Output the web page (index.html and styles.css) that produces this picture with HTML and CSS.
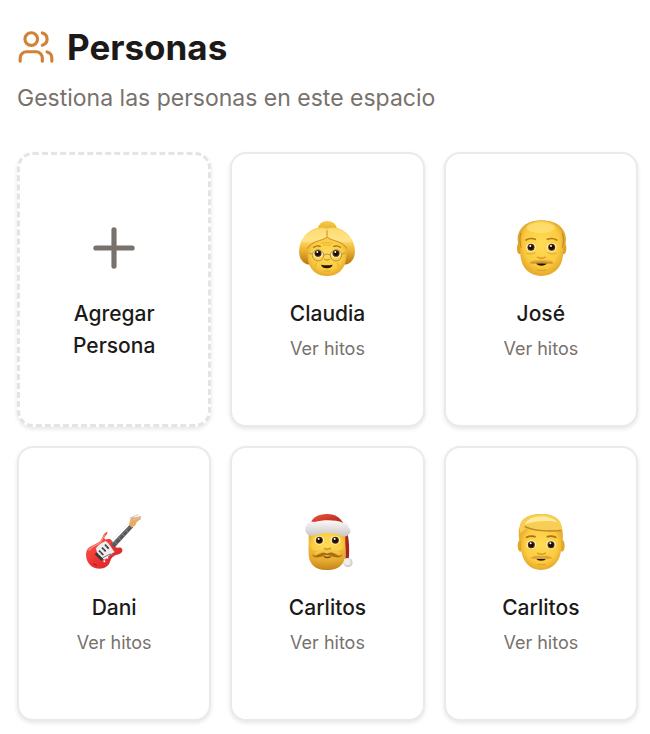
FILE: index.html
```html
<!DOCTYPE html>
<html lang="es">
<head>
<meta charset="utf-8">
<meta name="viewport" content="width=device-width, initial-scale=1">
<title>Personas</title>
<link rel="stylesheet" href="styles.css">
</head>
<body>
<main class="page">
  <header class="header">
    <div class="heading">
      <svg class="heading-icon" viewBox="0 0 24 24" aria-hidden="true">
        <path d="M16 21v-2a4 4 0 0 0-4-4H6a4 4 0 0 0-4 4v2"/>
        <circle cx="9" cy="7" r="4"/>
        <path d="M22 21v-2a4 4 0 0 0-3-3.87"/>
        <path d="M16 3.13a4 4 0 0 1 0 7.75"/>
      </svg>
      <h1 class="title">Personas</h1>
    </div>
    <p class="subtitle">Gestiona las personas en este espacio</p>
  </header>

  <section class="grid">
    <button class="card card-add" type="button">
      <svg class="plus" viewBox="0 0 24 24" aria-hidden="true"><path d="M5 12h14M12 5v14"/></svg>
      <span class="name">Agregar Persona</span>
    </button>

    <a class="card" href="#claudia">
      <svg class="avatar" viewBox="18 18 186 186" aria-hidden="true">
        <defs>
          <radialGradient id="skin" cx=".5" cy=".42" r=".62">
            <stop offset="0" stop-color="#ffdc56"/><stop offset=".65" stop-color="#fbcc40"/><stop offset="1" stop-color="#e0a026"/>
          </radialGradient>
          <linearGradient id="hair" x1="0" y1="0" x2="0" y2="1">
            <stop offset="0" stop-color="#f6c23c"/><stop offset=".3" stop-color="#ffe07a"/><stop offset=".6" stop-color="#efb630"/><stop offset="1" stop-color="#b87512"/>
          </linearGradient>
          <linearGradient id="bun" x1="0" y1="0" x2="0" y2="1">
            <stop offset="0" stop-color="#f8cc48"/><stop offset="1" stop-color="#dc9b20"/>
          </linearGradient>
          <g id="eye">
            <ellipse rx="15" ry="13" fill="#fff0b4"/>
            <circle r="10.500" fill="#4b2a0c"/><circle r="7" fill="#160c05"/>
            <circle cx="-2" cy="-4" r="3" fill="#fff"/>
          </g>
        </defs>
        <ellipse cx="112" cy="52" rx="28" ry="22" fill="url(#bun)"/>
        <path d="M111 52C83 42 44 61 32 95c-9 26-5 50 10 60 8 6 18 7 27 4h84c9 3 19 2 27-4 15-10 19-34 10-60C178 61 139 42 111 52Z" fill="url(#hair)"/>
        <path d="M111 80c-24 11-52 13-58 39v21c3 36 28 55 58 55s55-19 58-55v-21c-6-26-34-28-58-39Z" fill="url(#skin)"/>
        <path d="M111 54C90 44 51 57 35 94c30 1 63 2 76-19 13 21 46 20 76 19-16-37-55-50-76-40Z" fill="#ffe58a" opacity=".65"/>
        <path d="M111 78c-16 14-45 10-60 35M111 78c16 14 45 10 60 35M111 58v18" fill="none" stroke="#c98a22" stroke-width="3"/>
        <path d="M94 97q17-5 34 0M99 103q12-3 24 0" fill="none" stroke="#e0a32b" stroke-width="2"/>
        <path d="M71 109q9-7 20-3M131 106q11-4 20 3" fill="none" stroke="#a86b17" stroke-width="4" stroke-linecap="round"/>
        <use href="#eye" x="84" y="127"/><use href="#eye" x="138" y="127"/>
        <path d="M56 126l12 4M154 130l12-4M100 133q11-9 22 0" fill="none" stroke="#ad9356" stroke-width="3"/>
        <circle cx="84" cy="133" r="17" fill="none" stroke="#ad9356" stroke-width="3"/><circle cx="138" cy="133" r="17" fill="none" stroke="#ad9356" stroke-width="3"/>
        <path d="M102 144q9 6 18 0" fill="none" stroke="#d49528" stroke-width="4"/>
        <path d="M93 161q18 4 35 0c-3 14-32 14-35 0Z" fill="#241504"/>
        <path d="M80 155q-4 6-3 12M142 155q4 6 3 12M102 180h18" fill="none" stroke="#d99b25" stroke-width="2"/>
      </svg>
      <span class="name">Claudia</span>
      <span class="hint">Ver hitos</span>
    </a>

    <a class="card" href="#jose">
      <svg class="avatar" viewBox="18 18 186 186" aria-hidden="true">
        <ellipse cx="47" cy="112" rx="8" ry="18" fill="#e3a023"/><ellipse cx="179" cy="112" rx="8" ry="18" fill="#e3a023"/>
        <path d="M112 28c-45 0-72 25-71 58 0 13 5 21 8 28h128c5-9 9-16 9-28 0-33-26-58-74-58Z" fill="#e0ab34"/>
        <path d="M112 29c-42 0-62 25-63 56v48c3 39 29 62 63 62s62-23 65-62V85c-1-31-23-56-65-56Z" fill="url(#skin)"/>
        <ellipse cx="110" cy="50" rx="42" ry="16" fill="#ffe888" opacity=".55"/>
        <path d="M51 66c-6 17-2 33 0 44M175 66c6 17 2 33 0 44" fill="none" stroke="#bd8520" stroke-width="3"/>
        <path d="M66 87q13-8 28-2M130 85q16-6 28 2" fill="none" stroke="#b4771b" stroke-width="5" stroke-linecap="round"/>
        <use href="#eye" x="81" y="109"/><use href="#eye" x="143" y="109"/>
        <path d="M67 127q14 6 27-2M131 125q13 8 27 2" fill="none" stroke="#e3aa30" stroke-width="3"/>
        <path d="M101 139q11 6 23 0" fill="none" stroke="#dc9e2b" stroke-width="5" stroke-linecap="round"/>
        <path d="M96 156q17 2 33 0c-4 11-29 11-33 0Z" fill="#241504"/>
        <path d="M77 157c6-11 25-10 35-9 12-1 29-2 37 9-13 3-27 1-37 0-11 0-24 3-35 0Z" fill="#cf932b"/>
        <path d="M85 151q27-5 54 0" fill="none" stroke="#e9b64a" stroke-width="4"/>
        <path d="M98 177q14 4 29 0" fill="none" stroke="#d99d26" stroke-width="3"/>
      </svg>
      <span class="name">José</span>
      <span class="hint">Ver hitos</span>
    </a>

    <a class="card" href="#dani">
      <svg class="avatar" viewBox="18 18 186 186" aria-hidden="true">
        <defs><linearGradient id="guitar" x1="0" y1="0" x2="1" y2="1"><stop stop-color="#ff6554"/><stop offset=".5" stop-color="#ed3532"/><stop offset="1" stop-color="#d0222a"/></linearGradient></defs>
        <path d="M92 80c-16 4-14 21-23 29-11 11-35 12-41 31-5 22 9 46 29 50 18 4 38-3 43-22 4-13 12-17 25-20 10-3 14-11 9-18-4-6-12 2-19-5-8-7-6-17-15-22-8-4-14 3-17-1-4-6 8-12 9-22Z" fill="url(#guitar)"/>
        <path d="M85 89c-9 7-7 17-17 25-12 9-25 10-33 22" fill="none" stroke="#ff8c78" stroke-width="4"/>
        <path d="M86 108c-13 5-24 14-29 22 3 14 5 29 27 34 8-8 18-18 29-23-8-8-16-27-27-33Z" fill="#f0eff0"/>
        <path d="M102 118l58-60 9 8-57 62Z" fill="#55555a"/>
        <path d="M103 120l60-59" stroke="#85858a" stroke-width="2"/>
        <path d="M113 109l8 8M124 98l8 8M135 86l8 8M146 75l8 8" stroke="#aaa" stroke-width="2"/>
        <path d="M156 58l5-18c5-6 12-2 18-4 5-2 12-4 13 2 0 8-12 9-14 16-2 9-9 10-14 14Z" fill="#edaa65"/>
        <path d="M158 39l25-10M168 45l25-10" stroke="#cbc8c7" stroke-width="3"/>
        <path d="M84 119l11 12M75 128l11 11M66 137l13 13" stroke="#39373b" stroke-width="5"/>
        <path d="M56 145l20 19" stroke="#37383c" stroke-width="8"/><path d="M77 158l23-11M99 147l12 7" stroke="#777" stroke-width="3"/>
        <path d="M64 149L165 44" stroke="#d5d2d1" stroke-width="1"/>
        <circle cx="91" cy="158" r="3" fill="#fff"/><circle cx="82" cy="169" r="3" fill="#fff"/>
        <path d="M49 176l10 5" stroke="#8e151d" stroke-width="3"/>
      </svg>
      <span class="name">Dani</span>
      <span class="hint">Ver hitos</span>
    </a>

    <a class="card" href="#carlitos-1">
      <svg class="avatar" viewBox="18 18 186 186" aria-hidden="true">
        <defs>
          <linearGradient id="hat" x1="0" y1="0" x2="1" y2="1"><stop stop-color="#ef5a43"/><stop offset=".5" stop-color="#c93426"/><stop offset="1" stop-color="#8d1b19"/></linearGradient>
          <linearGradient id="fur" x1="0" y1="0" x2="0" y2="1"><stop stop-color="#fbfaf9"/><stop offset="1" stop-color="#c9c7c5"/></linearGradient>
          <linearGradient id="beard" x1="0" y1="0" x2="0" y2="1"><stop stop-color="#f2b936"/><stop offset=".6" stop-color="#e2a52b"/><stop offset="1" stop-color="#b97b17"/></linearGradient>
        </defs>
        <path d="M158 51c19 25 22 75 18 116l-10-1c2-39-3-69-13-98Z" fill="#a92320"/>
        <path d="M56 72v68c-1 36 20 55 55 55s56-19 55-55V72Z" fill="url(#skin)"/>
        <path d="M56 119c7 16 20 20 31 18 9-2 14-4 24-4s16 2 25 4c12 2 24-2 30-18v26c0 34-20 50-55 50s-55-16-55-50Z" fill="url(#beard)" opacity=".8"/>
        <path d="M61 61c2-24 24-34 50-34 27 0 45 13 54 40Z" fill="url(#hat)"/>
        <path d="M54 55c5-6 14-5 20-4 25-7 62-7 85 2 11-1 17 6 16 14 10 8 8 19-1 23-7 7-19 5-25 0-21-8-49-8-70-1-12 5-25 4-30-5-6-9-3-22 5-29Z" fill="url(#fur)"/>
        <use href="#eye" x="88" y="106"/><use href="#eye" x="136" y="106"/>
        <path d="M104 130q8 5 17 0" fill="none" stroke="#d3952b" stroke-width="5" stroke-linecap="round"/>
        <path d="M99 153q13 4 26 0-3 7-13 7t-13-7Z" fill="#7a4c0c"/>
        <path d="M111 145c-11-7-23 3-31 6-6 3-12-2-14-5 2 11 14 13 24 10 7-2 13-6 21-6s15 4 23 6c10 3 22 1 24-10-3 4-8 8-15 5-8-4-20-14-32-6Z" fill="#a96d11"/>
        <path d="M76 146c13-9 25-10 35-5 10-5 24-4 37 5" fill="none" stroke="#f4c54c" stroke-width="8"/>
        <path d="M78 174q34 12 66 0" fill="none" stroke="#d69d2b" stroke-width="2"/>
        <circle cx="174" cy="173" r="14" fill="#d5d1cf"/><circle cx="172" cy="170" r="10" fill="#f0eeed"/>
      </svg>
      <span class="name">Carlitos</span>
      <span class="hint">Ver hitos</span>
    </a>

    <a class="card" href="#carlitos-2">
      <svg class="avatar" viewBox="18 18 186 186" aria-hidden="true">
        <ellipse cx="49" cy="122" rx="8" ry="18" fill="#e3a628"/><ellipse cx="174" cy="122" rx="8" ry="18" fill="#e3a628"/>
        <path d="M46 108c-4-23-2-41 6-56 10-18 34-25 60-25 44 0 69 21 64 81Z" fill="#e6b037"/>
        <path d="M51 76v54c3 41 27 65 60 65s59-24 61-65V76c-25-9-82-7-109-13Z" fill="url(#skin)"/>
        <path d="M48 65C48 39 79 27 112 27c40 0 63 15 62 49-26 7-81 6-108-6-4 7-12 9-18 15Z" fill="#f8cd55"/>
        <path d="M62 58c13-27 71-34 98-6-22-7-66-6-98 6Z" fill="#ffeb9c"/>
        <path d="M62 64c26 15 80 16 110 12" fill="none" stroke="#bc8121" stroke-width="4"/>
        <path d="M68 97q12-6 25-2M130 95q13-4 25 2" fill="none" stroke="#ad6c17" stroke-width="5" stroke-linecap="round"/>
        <use href="#eye" x="82" y="119"/><use href="#eye" x="141" y="119"/>
        <path d="M101 145q11 6 23 0" fill="none" stroke="#dc9e2b" stroke-width="5" stroke-linecap="round"/>
        <path d="M96 160q16 3 31 0c-4 10-27 10-31 0Z" fill="#241504"/>
        <path d="M79 160c8-9 23-8 32-7 11-1 26-2 35 7-13 4-24 2-35 1-10 0-20 2-32-1Z" fill="#dda437"/>
        <path d="M99 179h26" stroke="#dda027" stroke-width="3"/>
      </svg>
      <span class="name">Carlitos</span>
      <span class="hint">Ver hitos</span>
    </a>
  </section>
</main>
</body>
</html>
```
FILE: styles.css
```css
* {
  box-sizing: border-box;
}

body {
  margin: 0;
  background: #fff;
  color: #1c1a18;
  font-family: Inter, "Liberation Sans", sans-serif;
}

.page {
  padding: 26px 12px 14px 17px;
}

.header {
  margin-bottom: 36px;
}

.heading {
  display: flex;
  align-items: center;
  gap: 12px;
}

.heading-icon,
.plus {
  fill: none;
  stroke-linecap: round;
  stroke-linejoin: round;
  stroke-width: 2;
}

.heading-icon {
  width: 38px;
  height: 38px;
  stroke: #d08336;
}

.title {
  margin: 0;
  font-size: 35px;
  font-weight: 700;
  line-height: 42px;
}

.subtitle {
  margin: 12px 0 0;
  color: #78716c;
  font-size: 23px;
  line-height: 36px;
}

.grid {
  display: grid;
  grid-template-columns: repeat(3, 1fr);
  grid-auto-rows: minmax(275px, auto);
  gap: 19px;
}

.card {
  display: flex;
  flex-direction: column;
  align-items: center;
  justify-content: center;
  padding: 32px;
  border: 2px solid #ebeae9;
  border-radius: 16px;
  background: #fff;
  box-shadow: 0 2px 4px rgb(0 0 0 / 10%);
  color: inherit;
  font: inherit;
  text-align: center;
  text-decoration: none;
  cursor: pointer;
}

.card-add {
  border: 3px dashed #e5e4e3;
}

.plus,
.avatar {
  width: 62px;
  height: 62px;
  margin-bottom: 19px;
}

.plus {
  stroke: #78716c;
}

.name {
  font-size: 21px;
  font-weight: 500;
  line-height: 32px;
}

.hint {
  margin-top: 6px;
  color: #78716c;
  font-size: 18px;
  line-height: 26px;
}
```
